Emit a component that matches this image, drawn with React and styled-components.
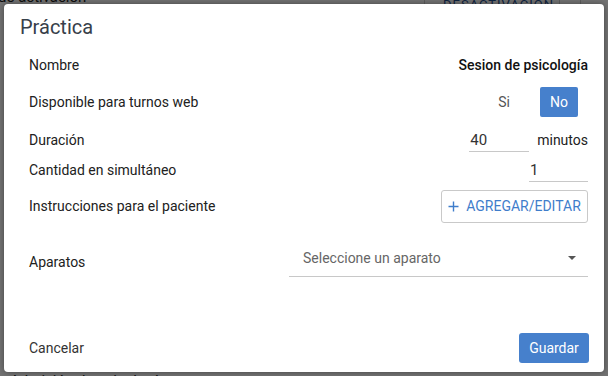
import React from "react";
import styled, { createGlobalStyle } from "styled-components";

const GlobalStyle = createGlobalStyle`
  * { box-sizing: border-box; }
  body {
    margin: 0;
    font-family: Roboto, "Liberation Sans", Arial, sans-serif;
    font-size: 14px;
    color: #212121;
  }
`;

const Page = styled.div`
  position: relative;
  width: 608px;
  height: 376px;
  overflow: hidden;
  background: #ffffff;
  display: flex;
  flex-direction: column;
  justify-content: space-between;
`;

const BgHeader = styled.div`
  display: flex;
  align-items: center;
  height: 22px;
  margin-top: -14px;
`;

const BgText = styled.span`
  font-size: 15px;
  color: #222;
  margin-left: ${(p) => p.$indent || 0}px;
  flex: ${(p) => (p.$grow ? 1 : "none")};
`;

const BgCell = styled.div`
  width: ${(p) => p.$w}px;
  height: 22px;
  border-left: 1px solid #cfcfcf;
  color: #1f4f8f;
  font-size: 13px;
  display: flex;
  align-items: center;
  padding-left: 18px;
  letter-spacing: 1px;
`;

const BgFooter = styled.div`
  height: 14px;
  margin-bottom: -10px;
  padding-left: 10px;
`;

const Overlay = styled.div`
  position: absolute;
  inset: 0;
  background: rgba(0, 0, 0, 0.55);
  display: flex;
  align-items: center;
  justify-content: center;
`;

const Dialog = styled.div`
  width: 600px;
  height: 368px;
  background: #ffffff;
  border-radius: 4px;
  box-shadow: 0 0 6px rgba(0, 0, 0, 0.4);
  display: flex;
  flex-direction: column;
`;

const Title = styled.h2`
  margin: 0;
  padding: 11px 16px 0 16px;
  font-size: 20px;
  line-height: 24px;
  font-weight: 400;
  color: #37404a;
`;

const Body = styled.div`
  flex: 1;
  padding: 9px 16px 0 25px;
  display: flex;
  flex-direction: column;
`;

const Row = styled.div`
  display: flex;
  align-items: ${(p) => p.$align || "center"};
  justify-content: space-between;
  height: ${(p) => p.$h}px;
  margin-top: ${(p) => p.$mt || 0}px;
`;

const Label = styled.span`
  align-self: center;
  color: #212121;
`;

const Value = styled.span`
  font-weight: 500;
  color: #111;
`;

const Toggle = styled.div`
  display: flex;
  gap: 17px;
  margin-right: 10px;
`;

const ToggleButton = styled.button`
  width: 38px;
  height: 30px;
  border: none;
  border-radius: 2px;
  font-family: inherit;
  font-size: 14px;
  background: ${(p) => (p.$active ? "#4680cc" : "transparent")};
  color: ${(p) => (p.$active ? "#ffffff" : "#555")};
  padding: 0;
`;

const Inline = styled.div`
  display: flex;
  align-items: center;
  gap: 8px;
`;

const NumberField = styled.div`
  width: ${(p) => p.$w}px;
  height: 23px;
  border-bottom: 1px solid #c8c8c8;
  display: flex;
  align-items: center;
  padding-left: 1px;
  font-size: 15px;
  color: #333;
`;

const Unit = styled.span`
  color: #222;
`;

const OutlineButton = styled.button`
  width: 147px;
  height: 33px;
  border: 1px solid #c9c9c9;
  border-radius: 3px;
  background: #fff;
  color: #3f7dcb;
  font-family: inherit;
  font-size: 14px;
  text-transform: uppercase;
  display: flex;
  align-items: center;
  justify-content: center;
  gap: 7px;
  padding: 0;
`;

const Select = styled.div`
  width: 299px;
  height: 38px;
  border-bottom: 1px solid #c8c8c8;
  display: flex;
  align-items: center;
  justify-content: space-between;
  padding: 0 12px 0 14px;
  color: #666;
  margin-top: 1px;
`;

const Caret = styled.span`
  width: 0;
  height: 0;
  border-left: 4px solid transparent;
  border-right: 4px solid transparent;
  border-top: 4px solid #555;
`;

const Footer = styled.div`
  display: flex;
  align-items: center;
  justify-content: space-between;
  padding: 0 15px 9px 25px;
`;

const TextButton = styled.button`
  border: none;
  background: none;
  padding: 0;
  font-family: inherit;
  font-size: 14px;
  color: #333;
`;

const PrimaryButton = styled.button`
  width: 70px;
  height: 30px;
  border: none;
  border-radius: 3px;
  background: #4680cc;
  color: #ffffff;
  font-family: inherit;
  font-size: 14px;
  padding: 0;
`;

const PlusIcon = () => (
  <svg width="11" height="11" viewBox="0 0 11 11">
    <path d="M5.5 0.5v10M0.5 5.5h10" stroke="#3f7dcb" strokeWidth="1.4" />
  </svg>
);

const App = () => {
  return (
    <Page>
      <GlobalStyle />
      <BgHeader>
        <BgText $grow $indent={-2}>de activación</BgText>
        <BgCell $w={135}>+ DESACTIVACIÓN</BgCell>
        <BgCell $w={21} />
        <BgCell $w={28} />
      </BgHeader>
      <BgFooter>
        <BgText>Admisión de psicología</BgText>
      </BgFooter>

      <Overlay>
        <Dialog>
          <Title>Práctica</Title>
          <Body>
            <Row $h={34}>
              <Label>Nombre</Label>
              <Value>Sesion de psicología</Value>
            </Row>
            <Row $h={40}>
              <Label>Disponible para turnos web</Label>
              <Toggle>
                <ToggleButton>Si</ToggleButton>
                <ToggleButton $active>No</ToggleButton>
              </Toggle>
            </Row>
            <Row $h={36}>
              <Label>Duración</Label>
              <Inline>
                <NumberField $w={60}>40</NumberField>
                <Unit>minutos</Unit>
              </Inline>
            </Row>
            <Row $h={24}>
              <Label>Cantidad en simultáneo</Label>
              <NumberField $w={59}>1</NumberField>
            </Row>
            <Row $h={48}>
              <Label>Instrucciones para el paciente</Label>
              <OutlineButton>
                <PlusIcon />
                Agregar/Editar
              </OutlineButton>
            </Row>
            <Row $h={48} $mt={8} $align="flex-start">
              <Label>Aparatos</Label>
              <Select>
                <span>Seleccione un aparato</span>
                <Caret />
              </Select>
            </Row>
          </Body>
          <Footer>
            <TextButton>Cancelar</TextButton>
            <PrimaryButton>Guardar</PrimaryButton>
          </Footer>
        </Dialog>
      </Overlay>
    </Page>
  );
};

export default App;
